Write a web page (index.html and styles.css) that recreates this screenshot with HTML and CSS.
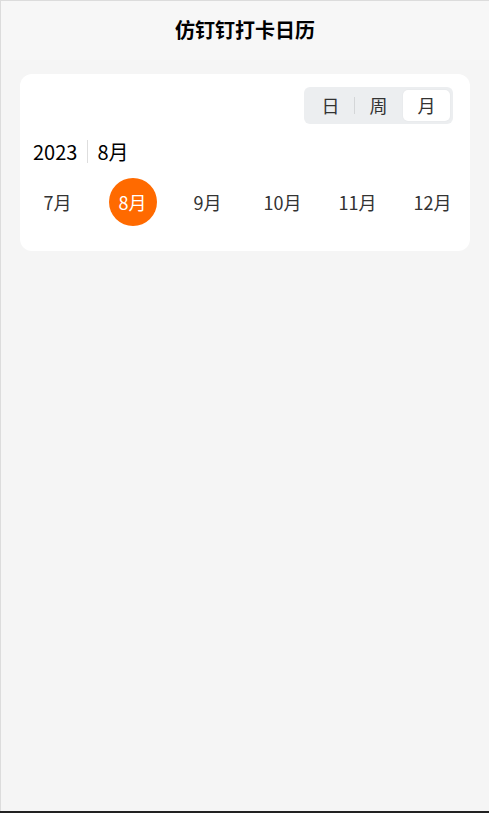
FILE: index.html
```html
<!DOCTYPE html>
<html lang="zh-CN">
<head>
  <meta charset="UTF-8" />
  <meta name="viewport" content="width=device-width, initial-scale=1.0"/>
  <title>仿钉钉打卡日历</title>
  <link rel="stylesheet" href="styles.css">
</head>
<body>
  <div class="page">
    <header class="topbar">仿钉钉打卡日历</header>

    <div class="card">
      <div class="switch-row">
        <div class="switch">
          <span class="switch-item">日</span>
          <span class="switch-sep"></span>
          <span class="switch-item">周</span>
          <span class="switch-sep hidden"></span>
          <span class="switch-item active">月</span>
        </div>
      </div>

      <div class="current">
        <span class="year">2023</span>
        <span class="divider"></span>
        <span class="month">8月</span>
      </div>

      <div class="months">
        <div class="month-item"><span>7月</span></div>
        <div class="month-item selected"><span>8月</span></div>
        <div class="month-item"><span>9月</span></div>
        <div class="month-item"><span>10月</span></div>
        <div class="month-item"><span>11月</span></div>
        <div class="month-item"><span>12月</span></div>
      </div>
    </div>
  </div>
  <div class="taskbar"></div>
</body>
</html>
```

FILE: styles.css
```css
html, body {
  height: 100%;
}
body {
  margin: 0;
  font-family: "Noto Sans CJK SC", "Noto Sans", sans-serif;
  background-color: #f5f5f5;
  display: flex;
  flex-direction: column;
}

.page {
  flex: 1;
  border-top: 1px solid #dcdcdc;
  border-left: 1px solid #dcdcdc;
}
.taskbar {
  height: 2px;
  background-color: #222;
}

.topbar {
  height: 59px;
  line-height: 58px;
  text-align: center;
  font-size: 20px;
  font-weight: bold;
  color: #000;
  background-color: #f7f7f7;
}

.card {
  margin: 14px 19px 0 19px;
  background-color: white;
  border-radius: 12px;
  padding: 13px 0 25px 0;
}

.switch-row {
  display: flex;
  justify-content: flex-end;
  padding-right: 17px;
}
.switch {
  display: flex;
  align-items: center;
  background-color: #eceef0;
  border-radius: 6px;
  padding: 3px;
}
.switch-item {
  width: 47px;
  height: 31px;
  line-height: 31px;
  text-align: center;
  font-size: 18px;
  color: #333;
  border-radius: 5px;
}
.switch-item.active {
  background-color: white;
  box-shadow: 0 0 2px rgba(0,0,0,0.06);
}
.switch-sep {
  width: 1px;
  height: 17px;
  background-color: #d4d6d8;
}
.switch-sep.hidden {
  background-color: transparent;
}

.current {
  display: flex;
  align-items: center;
  padding-left: 13px;
  margin-top: 14px;
  font-size: 20px;
  color: #000;
  height: 26px;
}
.divider {
  width: 1px;
  height: 23px;
  background-color: #dedede;
  margin: 0 9px 0 10px;
}

.months {
  display: grid;
  grid-template-columns: repeat(6, 1fr);
  margin-top: 14px;
}
.month-item {
  display: flex;
  justify-content: center;
}
.month-item span {
  width: 48px;
  height: 48px;
  line-height: 48px;
  text-align: center;
  border-radius: 50%;
  font-size: 18px;
  color: #333;
}
.month-item.selected span {
  background-color: #ff6a00;
  color: white;
}
```
